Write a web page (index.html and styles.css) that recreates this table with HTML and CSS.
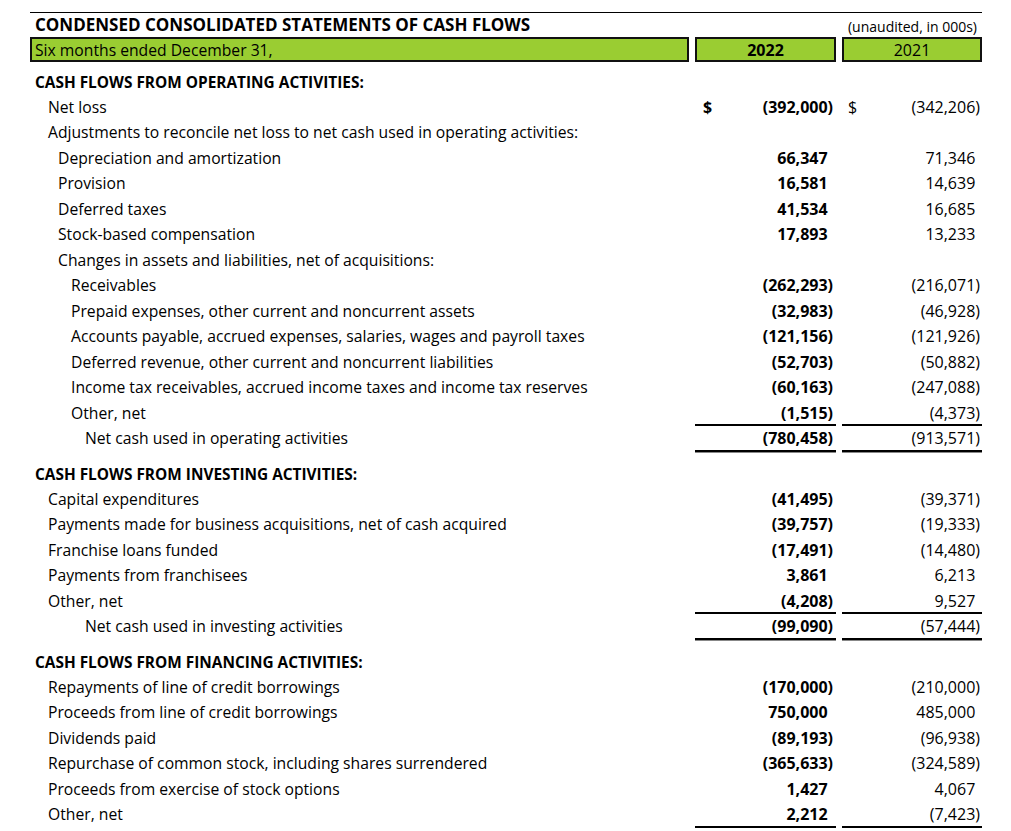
FILE: index.html
```html
<!DOCTYPE html>
<html>
<head>
<meta charset="utf-8">
<link rel="stylesheet" href="styles.css">
</head>
<body>
<div class="sheet">
  <div class="title-row">
    <div class="title">CONDENSED CONSOLIDATED STATEMENTS OF CASH FLOWS</div>
    <div></div>
    <div class="unaudited">(unaudited, in 000s)</div>
  </div>
  <div class="band">
    <div class="box box-label">Six months ended December 31,</div>
    <div class="box box-year bold">2022</div>
    <div class="box box-year">2021</div>
  </div>
  <div class="gap-top"></div>

  <div class="row"><div class="lbl l0 head">CASH FLOWS FROM OPERATING ACTIVITIES:</div><div class="c2"></div><div class="c3"></div></div>
  <div class="row"><div class="lbl l1">Net loss</div><div class="c2"><span>$</span><span>(392,000)</span></div><div class="c3"><span>$</span><span>(342,206)</span></div></div>
  <div class="row"><div class="lbl l1">Adjustments to reconcile net loss to net cash used in operating activities:</div><div class="c2"></div><div class="c3"></div></div>
  <div class="row"><div class="lbl l2">Depreciation and amortization</div><div class="c2"><span></span><span>66,347<i>)</i></span></div><div class="c3"><span></span><span>71,346<i>)</i></span></div></div>
  <div class="row"><div class="lbl l2">Provision</div><div class="c2"><span></span><span>16,581<i>)</i></span></div><div class="c3"><span></span><span>14,639<i>)</i></span></div></div>
  <div class="row"><div class="lbl l2">Deferred taxes</div><div class="c2"><span></span><span>41,534<i>)</i></span></div><div class="c3"><span></span><span>16,685<i>)</i></span></div></div>
  <div class="row"><div class="lbl l2">Stock-based compensation</div><div class="c2"><span></span><span>17,893<i>)</i></span></div><div class="c3"><span></span><span>13,233<i>)</i></span></div></div>
  <div class="row"><div class="lbl l2">Changes in assets and liabilities, net of acquisitions:</div><div class="c2"></div><div class="c3"></div></div>
  <div class="row"><div class="lbl l3">Receivables</div><div class="c2"><span></span><span>(262,293)</span></div><div class="c3"><span></span><span>(216,071)</span></div></div>
  <div class="row"><div class="lbl l3">Prepaid expenses, other current and noncurrent assets</div><div class="c2"><span></span><span>(32,983)</span></div><div class="c3"><span></span><span>(46,928)</span></div></div>
  <div class="row"><div class="lbl l3">Accounts payable, accrued expenses, salaries, wages and payroll taxes</div><div class="c2"><span></span><span>(121,156)</span></div><div class="c3"><span></span><span>(121,926)</span></div></div>
  <div class="row"><div class="lbl l3">Deferred revenue, other current and noncurrent liabilities</div><div class="c2"><span></span><span>(52,703)</span></div><div class="c3"><span></span><span>(50,882)</span></div></div>
  <div class="row"><div class="lbl l3">Income tax receivables, accrued income taxes and income tax reserves</div><div class="c2"><span></span><span>(60,163)</span></div><div class="c3"><span></span><span>(247,088)</span></div></div>
  <div class="row"><div class="lbl l3">Other, net</div><div class="c2 single"><span></span><span>(1,515)</span></div><div class="c3 single"><span></span><span>(4,373)</span></div></div>
  <div class="row"><div class="lbl l4">Net cash used in operating activities</div><div class="c2 double"><span></span><span>(780,458)</span></div><div class="c3 double"><span></span><span>(913,571)</span></div></div>
  <div class="spacer"></div>

  <div class="row"><div class="lbl l0 head">CASH FLOWS FROM INVESTING ACTIVITIES:</div><div class="c2"></div><div class="c3"></div></div>
  <div class="row"><div class="lbl l1">Capital expenditures</div><div class="c2"><span></span><span>(41,495)</span></div><div class="c3"><span></span><span>(39,371)</span></div></div>
  <div class="row"><div class="lbl l1">Payments made for business acquisitions, net of cash acquired</div><div class="c2"><span></span><span>(39,757)</span></div><div class="c3"><span></span><span>(19,333)</span></div></div>
  <div class="row"><div class="lbl l1">Franchise loans funded</div><div class="c2"><span></span><span>(17,491)</span></div><div class="c3"><span></span><span>(14,480)</span></div></div>
  <div class="row"><div class="lbl l1">Payments from franchisees</div><div class="c2"><span></span><span>3,861<i>)</i></span></div><div class="c3"><span></span><span>6,213<i>)</i></span></div></div>
  <div class="row"><div class="lbl l1">Other, net</div><div class="c2 single"><span></span><span>(4,208)</span></div><div class="c3 single"><span></span><span>9,527<i>)</i></span></div></div>
  <div class="row"><div class="lbl l4">Net cash used in investing activities</div><div class="c2 double"><span></span><span>(99,090)</span></div><div class="c3 double"><span></span><span>(57,444)</span></div></div>
  <div class="spacer"></div>

  <div class="row"><div class="lbl l0 head">CASH FLOWS FROM FINANCING ACTIVITIES:</div><div class="c2"></div><div class="c3"></div></div>
  <div class="row"><div class="lbl l1">Repayments of line of credit borrowings</div><div class="c2"><span></span><span>(170,000)</span></div><div class="c3"><span></span><span>(210,000)</span></div></div>
  <div class="row"><div class="lbl l1">Proceeds from line of credit borrowings</div><div class="c2"><span></span><span>750,000<i>)</i></span></div><div class="c3"><span></span><span>485,000<i>)</i></span></div></div>
  <div class="row"><div class="lbl l1">Dividends paid</div><div class="c2"><span></span><span>(89,193)</span></div><div class="c3"><span></span><span>(96,938)</span></div></div>
  <div class="row"><div class="lbl l1">Repurchase of common stock, including shares surrendered</div><div class="c2"><span></span><span>(365,633)</span></div><div class="c3"><span></span><span>(324,589)</span></div></div>
  <div class="row"><div class="lbl l1">Proceeds from exercise of stock options</div><div class="c2"><span></span><span>1,427<i>)</i></span></div><div class="c3"><span></span><span>4,067<i>)</i></span></div></div>
  <div class="row"><div class="lbl l1">Other, net</div><div class="c2 single"><span></span><span>2,212<i>)</i></span></div><div class="c3 single"><span></span><span>(7,423)</span></div></div>
</div>
</body>
</html>
```

FILE: styles.css
```css
html, body {
  margin: 0;
  padding: 0;
  background: #ffffff;
}
body {
  font-family: "Open Sans", Lato, sans-serif;
  font-size: 16px;
  color: #000;
}
.sheet {
  width: 952px;
  margin-left: 30px;
  padding-top: 12px;
}
.title-row,
.band,
.row {
  display: grid;
  grid-template-columns: 659px 141px 140px;
  column-gap: 6px;
}
.title-row {
  border-top: 1.5px solid #000;
  height: 24px;
  align-items: end;
}
.title {
  font-weight: bold;
  font-size: 17px;
  padding-left: 5px;
  line-height: 20px;
  position: relative;
  top: -2px;
  white-space: nowrap;
}
.unaudited {
  text-align: right;
  padding-right: 5px;
  font-size: 14px;
  line-height: 20px;
  white-space: nowrap;
}
.band {
  height: 25px;
}
.box {
  background: #9acd32;
  border: 2px solid #111;
  box-sizing: border-box;
  height: 25px;
  line-height: 22px;
}
.box-label {
  padding-left: 3px;
  font-size: 15.7px;
}
.box-year {
  text-align: center;
}
.bold {
  font-weight: bold;
}
.gap-top {
  height: 7px;
}
.spacer {
  height: 9.5px;
}
.row {
  height: 25.5px;
  line-height: 25.5px;
}
.lbl {
  white-space: nowrap;
  font-size: 15.7px;
}
.head {
  font-weight: bold;
  font-size: 15.4px;
  line-height: 27.5px;
}
.l0 { padding-left: 5px; }
.l1 { padding-left: 18px; }
.l2 { padding-left: 28px; }
.l3 { padding-left: 41px; }
.l4 { padding-left: 55px; }
.c2, .c3 {
  display: flex;
  justify-content: space-between;
}
.c2 {
  font-weight: bold;
  padding-left: 8px;
  padding-right: 3px;
}
.c3 {
  padding-left: 6px;
  padding-right: 2px;
}
.c2 i, .c3 i {
  font-style: normal;
  visibility: hidden;
}
.single {
  box-shadow: inset 0 -2px 0 #000;
}
.double {
  box-shadow: inset 0 -2px 0 #000, 0 1px 0 #888;
}
```
